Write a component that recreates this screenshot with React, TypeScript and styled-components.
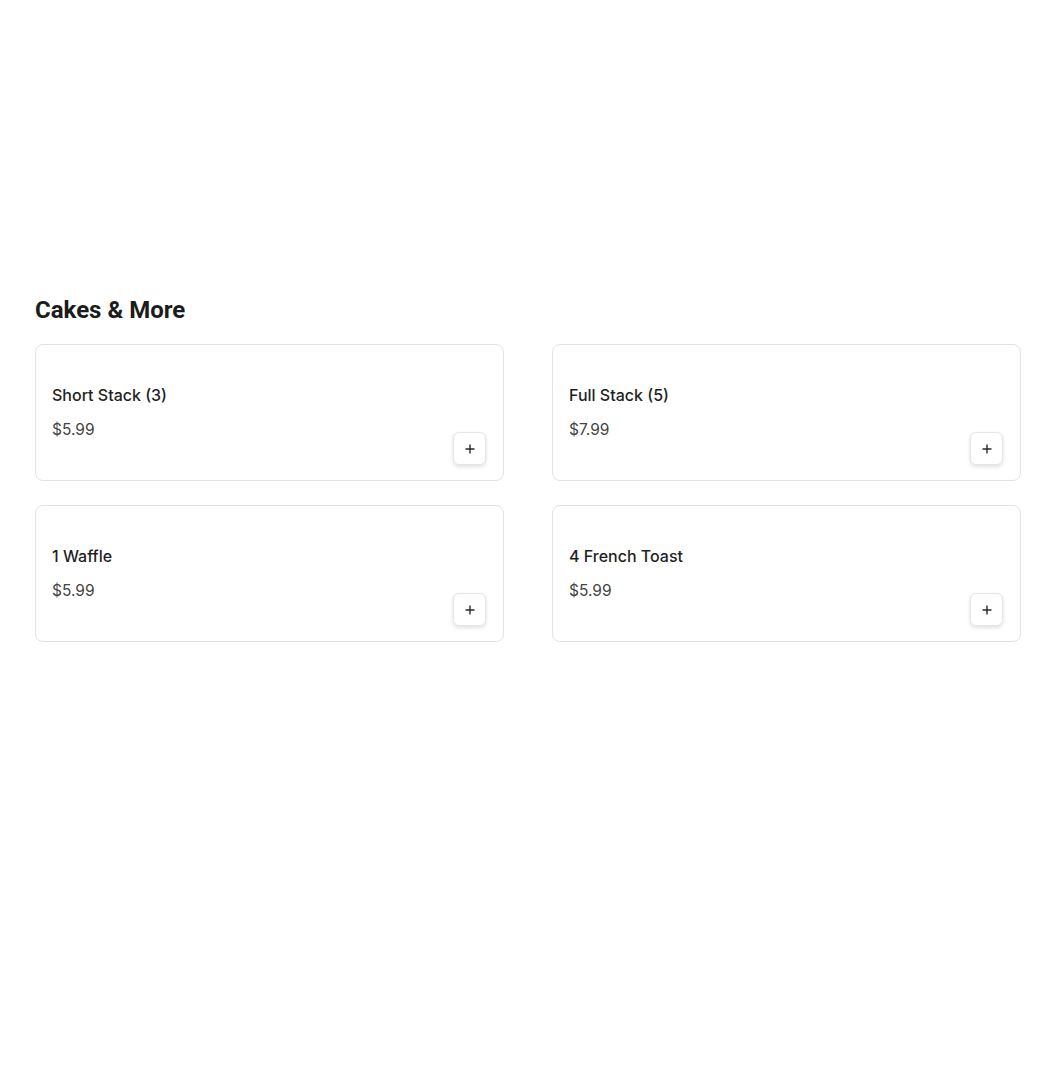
import styled, { createGlobalStyle } from 'styled-components';

const GlobalStyle = createGlobalStyle`
  html, body {
    margin: 0;
    padding: 0;
    background: #fff;
  }
  * {
    box-sizing: border-box;
  }
`;

const Page = styled.main`
  padding: 295px 29px 0 35px;
  font-family: Inter, 'Open Sans', sans-serif;
`;

const SectionTitle = styled.h2`
  margin: 0 0 19px;
  font-family: Roboto, 'Liberation Sans', sans-serif;
  font-size: 24px;
  line-height: 30px;
  font-weight: 700;
  color: #1c1c1c;
`;

const Grid = styled.div`
  display: grid;
  grid-template-columns: 1fr 1fr;
  column-gap: 48px;
  row-gap: 24px;
`;

const Card = styled.div`
  height: 137px;
  border: 1px solid #e3e3e3;
  border-radius: 8px;
  padding: 38px 17px 15px 16px;
  display: flex;
  justify-content: space-between;
  background: #fff;
`;

const Info = styled.div`
  display: flex;
  flex-direction: column;
  gap: 11px;
`;

const Name = styled.div`
  font-size: 16px;
  line-height: 24px;
  font-weight: 500;
  color: #1f1f1f;
`;

const Price = styled.div`
  font-size: 15.5px;
  line-height: 24px;
  font-weight: 400;
  color: #444;
`;

const AddButton = styled.button`
  align-self: flex-end;
  width: 33px;
  height: 33px;
  padding: 0;
  border: 1px solid #e6e6e6;
  border-radius: 6px;
  background: #fff;
  box-shadow: 0 2px 4px rgba(0, 0, 0, 0.12);
  display: flex;
  align-items: center;
  justify-content: center;
  cursor: pointer;
`;

const items = [
  { name: 'Short Stack (3)', price: '$5.99' },
  { name: 'Full Stack (5)', price: '$7.99' },
  { name: '1 Waffle', price: '$5.99' },
  { name: '4 French Toast', price: '$5.99' },
];

function PlusIcon() {
  return (
    <svg width="10" height="10" viewBox="0 0 10 10" fill="none">
      <path d="M5 0.5v9M0.5 5h9" stroke="#2a2a2a" strokeWidth="1.4" />
    </svg>
  );
}

export default function App() {
  return (
    <>
      <GlobalStyle />
      <Page>
        <SectionTitle>Cakes &amp; More</SectionTitle>
        <Grid>
          {items.map((item) => (
            <Card key={item.name}>
              <Info>
                <Name>{item.name}</Name>
                <Price>{item.price}</Price>
              </Info>
              <AddButton aria-label={`Add ${item.name}`}>
                <PlusIcon />
              </AddButton>
            </Card>
          ))}
        </Grid>
      </Page>
    </>
  );
}
